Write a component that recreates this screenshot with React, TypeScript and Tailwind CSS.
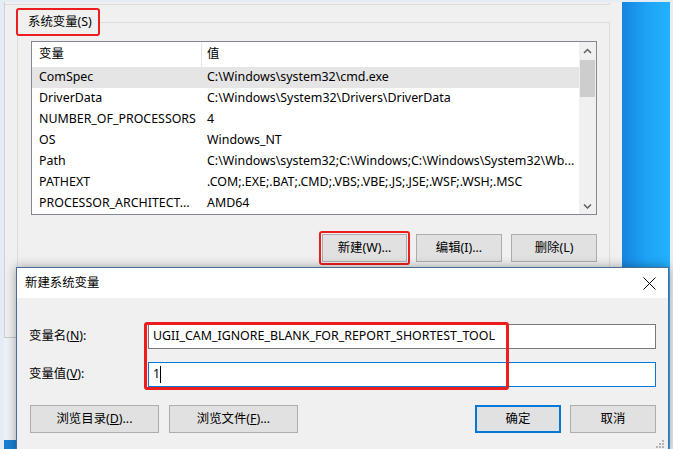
import React from "react";

type Row = { name: string; value: string; selected?: boolean };

const rows: Row[] = [
  { name: "ComSpec", value: "C:\\Windows\\system32\\cmd.exe", selected: true },
  { name: "DriverData", value: "C:\\Windows\\System32\\Drivers\\DriverData" },
  { name: "NUMBER_OF_PROCESSORS", value: "4" },
  { name: "OS", value: "Windows_NT" },
  {
    name: "Path",
    value: "C:\\Windows\\system32;C:\\Windows;C:\\Windows\\System32\\Wb...",
  },
  {
    name: "PATHEXT",
    value: ".COM;.EXE;.BAT;.CMD;.VBS;.VBE;.JS;.JSE;.WSF;.WSH;.MSC",
  },
  { name: "PROCESSOR_ARCHITECT...", value: "AMD64" },
];

const Chevron = ({ down }: { down?: boolean }) => (
  <svg width="9" height="6" viewBox="0 0 9 6">
    <path
      d={down ? "M1 1.5 L4.5 5 L8 1.5" : "M1 5 L4.5 1.5 L8 5"}
      stroke="#606060"
      strokeWidth="1.5"
      fill="none"
    />
  </svg>
);

const WinButton = ({
  children,
  width,
}: {
  children: React.ReactNode;
  width: string;
}) => (
  <div
    className={`${width} h-[28px] flex items-center justify-center bg-[#e1e1e1] border border-[#adadad] text-black`}
  >
    {children}
  </div>
);

const App = () => {
  return (
    <div className="relative w-[673px] h-[449px] overflow-hidden bg-[#e4ecf5] font-['Noto_Sans','Noto_Sans_CJK_SC',sans-serif] text-[12.4px] leading-none text-black">
      <div className="h-[2px]" />
      <div className="flex h-[447px]">
        <div className="w-[4px]" />

        {/* back window: environment variables */}
        <div className="w-[618px] flex flex-col">
          <div className="h-[335px] bg-[#f0f0f0] border-l border-[#d0d0d0] flex flex-col">
            <div className="w-[605px] h-[3px] border-b border-r border-[#dcdcdc]" />

            <div className="relative ml-[12px] mt-[17px] w-[593px] flex-1 border-t border-l border-r border-[#dcdcdc]">
              <div className="absolute left-[-2px] top-[-15px] w-[84px] h-[28px] flex items-center pl-[10px] bg-[#f0f0f0] border-2 border-[#ee1d1d] rounded-[3px] whitespace-nowrap">
                系统变量(S)
              </div>

              <div className="ml-[13px] mt-[18px] w-[566px] h-[174px] flex border border-[#828790] bg-white">
                <div className="flex-1 flex flex-col">
                  <div className="h-[25px] flex items-center">
                    <div className="w-[170px] h-full flex items-center pl-[7px] border-r border-[#e5e5e5]">
                      变量
                    </div>
                    <div className="pl-[5px]">值</div>
                  </div>
                  {rows.map((r) => (
                    <div
                      key={r.name}
                      className={`h-[21px] flex items-center whitespace-nowrap ${
                        r.selected ? "bg-[#e5e5e5]" : ""
                      }`}
                    >
                      <div className="w-[170px] shrink-0 pl-[7px]">{r.name}</div>
                      <div className="pl-[5px]">{r.value}</div>
                    </div>
                  ))}
                </div>
                <div className="w-[17px] bg-[#f0f0f0] flex flex-col">
                  <div className="h-[17px] flex items-center justify-center">
                    <Chevron />
                  </div>
                  <div className="h-[37px] mt-[1px] mx-[1px] bg-[#cdcdcd]" />
                  <div className="flex-1" />
                  <div className="h-[17px] flex items-center justify-center">
                    <Chevron down />
                  </div>
                </div>
              </div>

              <div className="ml-[13px] mt-[19px] w-[566px] flex justify-end gap-[9px]">
                <div className="-m-[3px] p-[1px] border-2 border-[#ee1d1d] rounded-[3px]">
                  <WinButton width="w-[85px]">新建(W)...</WinButton>
                </div>
                <WinButton width="w-[86px]">编辑(I)...</WinButton>
                <WinButton width="w-[86px]">删除(L)</WinButton>
              </div>
            </div>
          </div>
          <div className="flex-1 bg-[#eef2f6] border-t border-[#c8c8c8]" />
          <div className="h-[9px] w-[12px] bg-[#1a7fd0]" />
        </div>

        {/* desktop */}
        <div className="w-[48px] h-full bg-linear-to-r from-[#1685e0] via-[#1ea2f5] to-[#22b2ff]" />
        <div className="flex-1 bg-[#e8eef5]" />
      </div>

      {/* new system variable dialog */}
      <div className="absolute left-[16px] top-[267px] w-[653px] h-[186px] flex flex-col bg-[#f0f0f0] border border-[#4a6d94] shadow-[0_0_10px_rgba(0,0,0,0.35)]">
        <div className="h-[30px] shrink-0 bg-white flex items-center justify-between pl-[8px] pr-[12px]">
          <span>新建系统变量</span>
          <svg width="13" height="13" viewBox="0 0 13 13">
            <path d="M0.5 0.5 L12.5 12.5 M12.5 0.5 L0.5 12.5" stroke="#000" strokeWidth="1" />
          </svg>
        </div>

        <div className="pt-[26px] flex flex-col">
          <div className="flex items-center">
            <div className="w-[131px] pl-[12px]">
              变量名(<u>N</u>):
            </div>
            <div className="w-[508px] h-[25px] flex items-center pl-[4px] bg-white border border-[#7a7a7a] whitespace-nowrap">
              UGII_CAM_IGNORE_BLANK_FOR_REPORT_SHORTEST_TOOL
            </div>
          </div>
          <div className="flex items-center mt-[13px]">
            <div className="w-[131px] pl-[12px]">
              变量值(<u>V</u>):
            </div>
            <div className="w-[508px] h-[25px] flex items-center pl-[4px] bg-white border border-[#0078d7]">
              <span>1</span>
              <span className="w-[1px] h-[17px] bg-black" />
            </div>
          </div>

          <div className="flex mt-[18px] pl-[13px] pr-[12px]">
            <div className="flex gap-[10px]">
              <WinButton width="w-[129px]">
                浏览目录(<u>D</u>)...
              </WinButton>
              <WinButton width="w-[129px]">
                浏览文件(<u>F</u>)...
              </WinButton>
            </div>
            <div className="ml-auto flex gap-[9px]">
              <div className="w-[86px] h-[28px] flex items-center justify-center bg-[#e1e1e1] border-2 border-[#0078d7]">
                确定
              </div>
              <WinButton width="w-[86px]">取消</WinButton>
            </div>
          </div>
        </div>

        <div className="absolute left-[127px] top-[54px] w-[365px] h-[68px] border-[3px] border-[#ee1d1d] rounded-[3px] pointer-events-none" />

        <svg
          className="absolute right-[4px] bottom-[4px]"
          width="8"
          height="8"
          viewBox="0 0 8 8"
        >
          <rect x="6" y="0" width="2" height="2" fill="#b4b4b4" />
          <rect x="3" y="3" width="2" height="2" fill="#b4b4b4" />
          <rect x="6" y="3" width="2" height="2" fill="#b4b4b4" />
          <rect x="0" y="6" width="2" height="2" fill="#b4b4b4" />
          <rect x="3" y="6" width="2" height="2" fill="#b4b4b4" />
          <rect x="6" y="6" width="2" height="2" fill="#b4b4b4" />
        </svg>
      </div>
    </div>
  );
};

export default App;
